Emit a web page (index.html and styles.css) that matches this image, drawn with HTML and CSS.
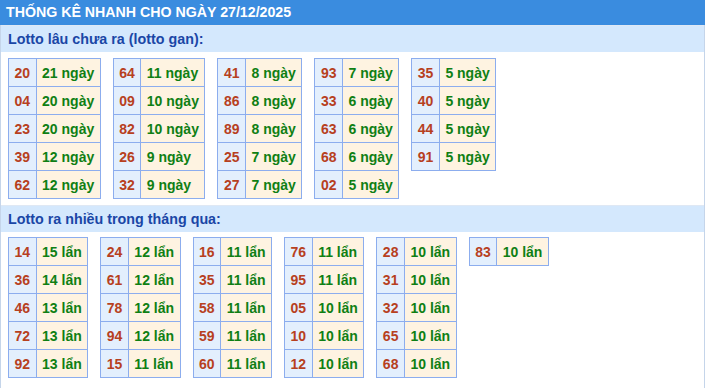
FILE: index.html
```html
<!DOCTYPE html>
<html lang="vi">
<head>
<meta charset="utf-8">
<link rel="stylesheet" href="styles.css">
</head>
<body>
<div class="box">
  <div class="title">THỐNG KÊ NHANH CHO NGÀY 27/12/2025</div>
  <div class="sub">Lotto lâu chưa ra (lotto gan):</div>
  <div class="grid first">
    <table><tr><td class="n">20</td><td class="v">21 ngày</td></tr><tr><td class="n">04</td><td class="v">20 ngày</td></tr><tr><td class="n">23</td><td class="v">20 ngày</td></tr><tr><td class="n">39</td><td class="v">12 ngày</td></tr><tr><td class="n">62</td><td class="v">12 ngày</td></tr></table>
    <table><tr><td class="n">64</td><td class="v">11 ngày</td></tr><tr><td class="n">09</td><td class="v">10 ngày</td></tr><tr><td class="n">82</td><td class="v">10 ngày</td></tr><tr><td class="n">26</td><td class="v">9 ngày</td></tr><tr><td class="n">32</td><td class="v">9 ngày</td></tr></table>
    <table><tr><td class="n">41</td><td class="v">8 ngày</td></tr><tr><td class="n">86</td><td class="v">8 ngày</td></tr><tr><td class="n">89</td><td class="v">8 ngày</td></tr><tr><td class="n">25</td><td class="v">7 ngày</td></tr><tr><td class="n">27</td><td class="v">7 ngày</td></tr></table>
    <table><tr><td class="n">93</td><td class="v">7 ngày</td></tr><tr><td class="n">33</td><td class="v">6 ngày</td></tr><tr><td class="n">63</td><td class="v">6 ngày</td></tr><tr><td class="n">68</td><td class="v">6 ngày</td></tr><tr><td class="n">02</td><td class="v">5 ngày</td></tr></table>
    <table><tr><td class="n">35</td><td class="v">5 ngày</td></tr><tr><td class="n">40</td><td class="v">5 ngày</td></tr><tr><td class="n">44</td><td class="v">5 ngày</td></tr><tr><td class="n">91</td><td class="v">5 ngày</td></tr></table>
  </div>
  <div class="sub">Lotto ra nhiều trong tháng qua:</div>
  <div class="grid second">
    <table><tr><td class="n">14</td><td class="v">15 lẩn</td></tr><tr><td class="n">36</td><td class="v">14 lẩn</td></tr><tr><td class="n">46</td><td class="v">13 lẩn</td></tr><tr><td class="n">72</td><td class="v">13 lẩn</td></tr><tr><td class="n">92</td><td class="v">13 lẩn</td></tr></table>
    <table><tr><td class="n">24</td><td class="v">12 lẩn</td></tr><tr><td class="n">61</td><td class="v">12 lẩn</td></tr><tr><td class="n">78</td><td class="v">12 lẩn</td></tr><tr><td class="n">94</td><td class="v">12 lẩn</td></tr><tr><td class="n">15</td><td class="v">11 lẩn</td></tr></table>
    <table><tr><td class="n">16</td><td class="v">11 lẩn</td></tr><tr><td class="n">35</td><td class="v">11 lẩn</td></tr><tr><td class="n">58</td><td class="v">11 lẩn</td></tr><tr><td class="n">59</td><td class="v">11 lẩn</td></tr><tr><td class="n">60</td><td class="v">11 lẩn</td></tr></table>
    <table><tr><td class="n">76</td><td class="v">11 lẩn</td></tr><tr><td class="n">95</td><td class="v">11 lẩn</td></tr><tr><td class="n">05</td><td class="v">10 lẩn</td></tr><tr><td class="n">10</td><td class="v">10 lẩn</td></tr><tr><td class="n">12</td><td class="v">10 lẩn</td></tr></table>
    <table><tr><td class="n">28</td><td class="v">10 lẩn</td></tr><tr><td class="n">31</td><td class="v">10 lẩn</td></tr><tr><td class="n">32</td><td class="v">10 lẩn</td></tr><tr><td class="n">65</td><td class="v">10 lẩn</td></tr><tr><td class="n">68</td><td class="v">10 lẩn</td></tr></table>
    <table><tr><td class="n">83</td><td class="v">10 lẩn</td></tr></table>
  </div>
</div>
</body>
</html>
```
FILE: styles.css
```css
html, body {
  margin: 0;
  padding: 0;
  background: #fff;
}
body {
  font-family: "Liberation Sans", Arial, sans-serif;
  font-weight: bold;
  font-size: 14px;
}
.box {
  width: 703px;
  height: 388px;
  border-left: 1px solid #c5d5ea;
  border-right: 1px solid #c5d5ea;
  box-sizing: content-box;
}
.title {
  background: #3a8cdf;
  color: #fff;
  height: 25px;
  line-height: 25px;
  padding-left: 6px;
  margin: 0 -1px 0 -1px;
  font-size: 14.2px;
}
.sub {
  background: #d4e8fd;
  color: #1a46a6;
  height: 26px;
  line-height: 26px;
  padding-left: 7px;
  border-top: 1px solid #dfe8f4;
  font-size: 14.3px;
}
.grid {
  display: flex;
  align-items: flex-start;
  gap: 12px;
  padding: 6px 7px 6px;
}
.second {
  padding-top: 5px;
}
table {
  border-collapse: collapse;
}
td {
  border: 1px solid #8cadee;
  height: 28px;
  padding: 0 5.5px;
  box-sizing: border-box;
  white-space: nowrap;
  font-size: 14px;
  line-height: 16px;
}
td.n {
  background: #e3effd;
  color: #b7401e;
  text-align: center;
}
td.v {
  background: #fef3e1;
  color: #0f7f14;
}
```
